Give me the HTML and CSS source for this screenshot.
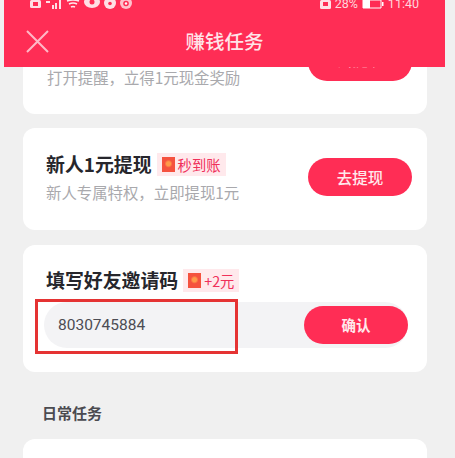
FILE: index.html
```html
<!DOCTYPE html>
<html lang="zh">
<head>
<meta charset="utf-8">
<title>赚钱任务</title>
<link rel="stylesheet" href="styles.css">
</head>
<body>
<header class="topbar">
  <div class="status">
    <div class="status-left">
      <svg width="12" height="9" viewBox="0 0 12 9"><rect x="0" y="0" width="11" height="8" rx="1.5" fill="#fff" opacity=".85"/><rect x="3" y="2" width="5" height="4" fill="#ff2d55"/></svg>
      <svg width="16" height="9" viewBox="0 0 16 9"><g fill="#fff" opacity=".85"><rect x="0" y="1" width="4" height="2"/><rect x="6" y="5" width="2" height="4"/><rect x="9" y="3" width="2" height="6"/><rect x="13" y="0" width="2" height="9"/></g></svg>
      <svg width="14" height="9" viewBox="0 0 14 9"><g fill="none" stroke="#fff" stroke-width="1.600" opacity=".9"><path d="M1 1q6-2 12 0"/><path d="M3 4q4-2 8 0"/><path d="M5 7q2-1 4 0"/></g></svg>
      <svg width="16" height="9" viewBox="0 0 16 9"><ellipse cx="8" cy="2" rx="8" ry="6" fill="#fff" opacity=".85"/><circle cx="8" cy="2" r="2.500" fill="#ff2d55"/></svg>
      <svg width="12" height="10" viewBox="0 0 12 10"><circle cx="6" cy="3" r="6" fill="#fff" opacity=".85"/><circle cx="6" cy="3.500" r="1.800" fill="#ff2d55"/></svg>
      <svg width="12" height="10" viewBox="0 0 12 10"><circle cx="6" cy="3" r="6" fill="#fff" opacity=".7"/><circle cx="6" cy="3.500" r="2.800" fill="#ff2d55"/><circle cx="6" cy="3.500" r="1.200" fill="#fff"/></svg>
    </div>
    <div class="status-right">
      <svg width="11" height="9" viewBox="0 0 11 9"><rect width="11" height="9" rx="1.500" fill="#fff" opacity=".85"/><rect x="3" y="2" width="5" height="4" fill="#ff2d55"/></svg>
      <span>28%</span>
      <svg width="22" height="9" viewBox="0 0 22 9"><path d="M1 0h18v8H1z" fill="none" stroke="#fff" stroke-width="1"/><rect x="1" y="0" width="7" height="8" fill="#fff"/><rect x="20" y="2" width="1.500" height="4" fill="#fff"/></svg>
      <span>11:40</span>
    </div>
  </div>
  <div class="navrow">
    <svg class="close" width="23" height="23" viewBox="0 0 23 23"><path d="M1 1l21 21M22 1L1 22" fill="none" stroke="#ffb9c6" stroke-width="2"/></svg>
    <h1 class="navtitle">赚钱任务</h1>
  </div>
</header>

<main class="page">
  <section class="card card-first">
    <div class="info">
      <p class="sub">打开提醒，立得1元现金奖励</p>
    </div>
    <span class="btn btn-peek">去提现</span>
  </section>

  <section class="card card-task">
    <div class="info">
      <div class="title-row">
        <h2 class="title">新人1元提现</h2>
        <span class="tag"><i class="packet"></i>秒到账</span>
      </div>
      <p class="sub">新人专属特权，立即提现1元</p>
    </div>
    <button class="btn">去提现</button>
  </section>

  <section class="card card-invite">
    <div class="title-row">
      <h2 class="title">填写好友邀请码</h2>
      <span class="tag"><i class="packet"></i>+2元</span>
    </div>
    <div class="invite-field">
      <div class="code">8030745884</div>
      <button class="btn btn-bold">确认</button>
      <div class="highlight"></div>
    </div>
  </section>

  <h3 class="section-label">日常任务</h3>
  <section class="card card-next"></section>
</main>
</body>
</html>
```
FILE: styles.css
```css
* { box-sizing: border-box; }
html, body { margin: 0; height: 100%; overflow: hidden; }
body {
  position: relative;
  background: #f0f0f0;
  font-family: "Noto Sans CJK SC", "Noto Sans", sans-serif;
}
.topbar {
  position: absolute;
  top: 0;
  left: 4px;
  width: 441px;
  height: 67px;
  background: #ff2d55;
  color: #fff;
  z-index: 2;
}
.status {
  display: flex;
  justify-content: space-between;
  align-items: flex-start;
  height: 22px;
  padding: 0 26px;
}
.status-left { display: flex; gap: 4px; align-items: flex-start; }
.status-right {
  display: flex;
  align-items: flex-start;
  gap: 4px;
  font-family: "Roboto", sans-serif;
  font-size: 12.500px;
  line-height: 8px;
  color: #ffd5dd;
}
.navrow {
  position: relative;
  display: flex;
  justify-content: center;
  align-items: center;
  height: 38px;
}
.close { position: absolute; left: 22px; top: 8px; }
.navtitle {
  margin: 0;
  font-size: 19.500px;
  font-weight: 500;
  line-height: 38px;
  color: #ffe4e9;
}
.page {
  display: flex;
  flex-direction: column;
  padding: 0 28px 0 23px;
}
.card {
  background: #fff;
  border-radius: 12px;
  width: 404px;
}
.card-first {
  height: 114px;
  border-radius: 0 0 12px 12px;
  padding: 0 15px 0 24px;
  display: flex;
  justify-content: space-between;
}
.card-first .info { padding-top: 67px; }
.card-first .sub { margin: 0; }
.btn {
  display: inline-flex;
  align-items: center;
  justify-content: center;
  width: 104px;
  height: 38px;
  border: 0;
  border-radius: 19px;
  background: #ff2d55;
  color: #ffe8ec;
  font-family: inherit;
  font-size: 15.500px;
  font-weight: 500;
  padding: 0;
}
.btn-peek { margin-top: 43px; padding-bottom: 6px; }
.btn-bold { font-weight: 700; font-size: 14.500px; padding-bottom: 2px; }
.card-task {
  margin-top: 14px;
  height: 102px;
  padding: 0 15px 4px 23px;
  display: flex;
  justify-content: space-between;
  align-items: center;
}
.title-row { display: flex; align-items: center; gap: 5px; }
.title {
  margin: 0;
  font-size: 18.900px;
  font-weight: 700;
  line-height: 24px;
  color: #26262c;
}
.tag {
  display: inline-flex;
  align-items: center;
  gap: 3px;
  height: 23px;
  padding: 0 5px;
  background: #ffe9ec;
  color: #f0305a;
  font-size: 14.300px;
}
.packet {
  display: block;
  width: 13px;
  height: 15px;
  background: radial-gradient(circle at 50% 45%, #ff9a4a 0 2px, #f5523f 4px);
}
.sub {
  margin: 6px 0 0;
  font-size: 15.400px;
  line-height: 20px;
  color: #a9a9ad;
}
.card-invite {
  margin-top: 15px;
  height: 127px;
  padding: 23px 19px 0 21px;
}
.card-invite .title-row { padding-left: 2px; }
.invite-field {
  position: relative;
  display: flex;
  align-items: center;
  justify-content: space-between;
  height: 46px;
  margin-top: 10px;
  background: #f3f3f5;
  border-radius: 23px;
}
.code {
  padding-left: 14px;
  font-family: "Roboto", sans-serif;
  font-size: 15.500px;
  color: #4c4c53;
}
.highlight {
  position: absolute;
  left: -9px;
  top: -3px;
  width: 203px;
  height: 55px;
  border: 3px solid #e53333;
}
.section-label {
  margin: 30px 0 0 19px;
  font-size: 15px;
  font-weight: 700;
  line-height: 22px;
  color: #4b4b50;
}
.card-next {
  margin-top: 15px;
  height: 19px;
  border-radius: 12px 12px 0 0;
}
```
